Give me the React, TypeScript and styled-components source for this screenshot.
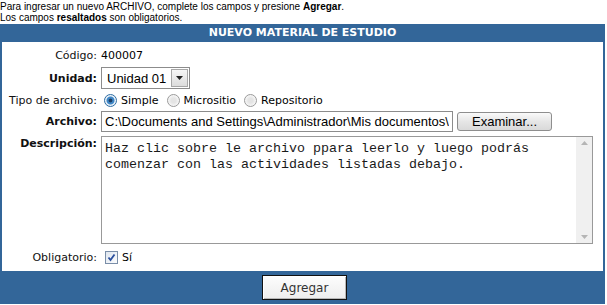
import styled, { createGlobalStyle } from "styled-components";

const GlobalStyle = createGlobalStyle`
body{
  margin:0;
  background:#fff;
  font-family:"DejaVu Sans", Verdana, sans-serif;
  color:#000;
}
`;

const Intro = styled.div`
font-family:"Liberation Sans", Arial, sans-serif;
font-size:10px;
line-height:11px;
padding-top:1px;
height:23px;
`;

const Panel = styled.div`
width:601px;
border-left:2px solid #336699;
border-right:2px solid #336699;
background:#fff;
`;

const Header = styled.div`
background:#336699;
color:#fff;
font-weight:bold;
font-size:11px;
height:18px;
line-height:18px;
text-align:center;
`;

const Grid = styled.div`
display:grid;
grid-template-columns:95px 1fr;
column-gap:4px;
padding-top:2px;
`;

const Label = styled.label<{ $bold?: boolean; $top?: boolean }>`
font-size:11px;
font-weight:${p => (p.$bold ? "bold" : "normal")};
text-align:right;
display:flex;
justify-content:flex-end;
align-items:${p => (p.$top ? "flex-start" : "center")};
padding-top:${p => (p.$top ? "5px" : "0")};
color:#111;
white-space:nowrap;
`;

const Field = styled.div<{ $h: number; $gap?: number }>`
display:flex;
align-items:center;
gap:${p => (p.$gap ?? 4)}px;
height:${p => p.$h}px;
font-size:11px;
`;

const SelectBox = styled.div`
display:flex;
align-items:center;
height:18px;
border:1px solid #8c8c8c;
padding:1px;
background:#fff;
`;

const Select = styled.select`
appearance:none;
border:none;
outline:none;
background:transparent;
font-family:"Liberation Sans", Arial, sans-serif;
font-size:13px;
padding:0 4px;
width:68px;
color:#000;
`;

const ArrowBox = styled.span`
width:15px;
height:16px;
border:1px solid #a7a7a7;
background:linear-gradient(#f6f6f6,#dcdcdc);
display:flex;
align-items:center;
justify-content:center;
`;

const Radio = styled.input`
appearance:none;
margin:0 4px 0 3px;
width:13px;
height:13px;
border-radius:50%;
border:1px solid #9a9a9a;
background:radial-gradient(circle, #e4e4e4 30%, #f7f7f7 70%);
&:checked{
  border-color:#2d6da3;
  background:radial-gradient(circle, #1d3f66 0 18%, #3e86c6 30% 45%, #e9f1f8 58%);
}
`;

const RadioText = styled.span`
margin-right:5px;
`;

const TextInput = styled.input`
box-sizing:border-box;
width:352px;
height:21px;
border:1px solid #8c8c8c;
font-family:"Liberation Sans", Arial, sans-serif;
font-size:13px;
padding:0 3px;
color:#000;
`;

const BrowseBtn = styled.button`
width:95px;
height:19px;
border:1px solid #8e8e8e;
border-radius:3px;
background:linear-gradient(#fafafa,#e6e6e6 50%,#d9d9d9);
font-family:"Liberation Sans", Arial, sans-serif;
font-size:13px;
padding:0;
color:#000;
`;

const AreaBox = styled.div`
display:flex;
width:490px;
height:106px;
border:1px solid #999;
margin:4px 0 2px 0;
`;

const TextArea = styled.textarea`
flex:1;
border:none;
outline:none;
resize:none;
overflow:hidden;
font-family:"Liberation Mono", "Courier New", monospace;
font-size:13.33px;
line-height:16px;
padding:4px 3px;
color:#1a1a1a;
`;

const ScrollTrack = styled.div`
width:16px;
background:#f0f0f0;
display:flex;
flex-direction:column;
justify-content:space-between;
align-items:center;
padding:4px 0;
`;

const CheckBox = styled.span`
width:11px;
height:11px;
border:1px solid #7a8ea8;
background:linear-gradient(135deg,#dfe6ef,#fbfcfd);
display:flex;
align-items:center;
justify-content:center;
margin-left:4px;
`;

const Footer = styled.div`
background:#336699;
height:33px;
display:flex;
justify-content:center;
align-items:center;
margin-top:2px;
`;

const SubmitBtn = styled.button`
width:85px;
height:25px;
margin-left:4px;
border:1px solid #111;
box-shadow:inset 1px 1px 0 #fff, inset -1px -1px 0 #b8b8b8;
background:linear-gradient(#fdfdfd,#ededed);
font-family:"DejaVu Sans", Verdana, sans-serif;
font-size:12px;
color:#333;
padding:0;
`;

export default function App() {
  return (
    <>
      <GlobalStyle />
      <Intro>
        Para ingresar un nuevo ARCHIVO, complete los campos y presione <b>Agregar</b>.
        <br />
        Los campos <b>resaltados</b> son obligatorios.
      </Intro>
      <Panel>
        <Header>NUEVO MATERIAL DE ESTUDIO</Header>
        <Grid>
          <Label>Código:</Label>
          <Field $h={22}>400007</Field>

          <Label $bold>Unidad:</Label>
          <Field $h={24}>
            <SelectBox>
              <Select defaultValue="01">
                <option value="01">Unidad 01</option>
              </Select>
              <ArrowBox>
                <svg width="7" height="4" viewBox="0 0 7 4">
                  <path d="M0 0h7L3.5 4z" fill="#222" />
                </svg>
              </ArrowBox>
            </SelectBox>
          </Field>

          <Label>Tipo de archivo:</Label>
          <Field $h={20} $gap={0}>
            <Radio type="radio" name="tipo" defaultChecked />
            <RadioText>Simple</RadioText>
            <Radio type="radio" name="tipo" />
            <RadioText>Micrositio</RadioText>
            <Radio type="radio" name="tipo" />
            <RadioText>Repositorio</RadioText>
          </Field>

          <Label $bold>Archivo:</Label>
          <Field $h={22}>
            <TextInput defaultValue="C:\Documents and Settings\Administrador\Mis documentos\Material.pdf" />
            <BrowseBtn type="button">Examinar...</BrowseBtn>
          </Field>

          <Label $bold $top>Descripción:</Label>
          <AreaBox>
            <TextArea defaultValue={"Haz clic sobre le archivo ppara leerlo y luego podrás\ncomenzar con las actividades listadas debajo."} />
            <ScrollTrack>
              <svg width="7" height="4" viewBox="0 0 7 4"><path d="M0 4h7L3.5 0z" fill="#b5b5b5" /></svg>
              <svg width="7" height="4" viewBox="0 0 7 4"><path d="M0 0h7L3.5 4z" fill="#b5b5b5" /></svg>
            </ScrollTrack>
          </AreaBox>

          <Label>Obligatorio:</Label>
          <Field $h={23}>
            <CheckBox>
              <svg width="9" height="9" viewBox="0 0 9 9">
                <path d="M1.5 4.5l2 2.5L7.5 1.5" stroke="#2b4f9e" strokeWidth="1.8" fill="none" />
              </svg>
            </CheckBox>
            <span>Sí</span>
          </Field>
        </Grid>
        <Footer>
          <SubmitBtn type="button">Agregar</SubmitBtn>
        </Footer>
      </Panel>
    </>
  );
}
